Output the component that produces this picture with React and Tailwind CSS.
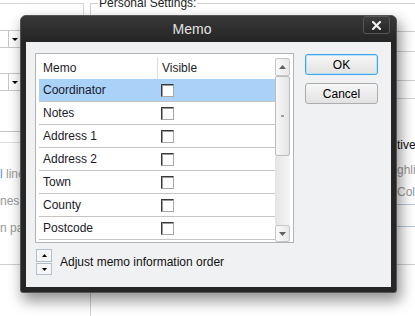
import React from "react";

// Memo dialog (dark frame) over a settings window
const rows = ["Coordinator", "Notes", "Address 1", "Address 2", "Town", "County", "Postcode"];

function Check() {
  return (
    <div className="w-[13px] h-[13px] bg-white border border-[#a8a8a8] border-t-[#3a3a3a] border-l-[#3a3a3a] shadow-[inset_1px_1px_0_#9a9a9a]" />
  );
}

function Arrow({ up, color = "#000", w = 7, h = 4 }) {
  return (
    <svg width={w} height={h} viewBox={`0 0 ${w} ${h}`}>
      <polygon points={up ? `0,${h} ${w / 2},0 ${w},${h}` : `0,0 ${w},0 ${w / 2},${h}`} fill={color} />
    </svg>
  );
}

function Combo() {
  return (
    <div className="h-[18px] w-[30px] border-y border-[#c8c8c8] flex">
      <div className="w-[9px] border-r border-[#c8c8c8]" />
      <div className="w-[12px] flex items-center justify-center">
        <Arrow w={6} h={3} />
      </div>
    </div>
  );
}

function Background() {
  return (
    <div className="flex w-[415px] h-[316px] bg-white text-[12px] text-[#999]">
      {/* left strip */}
      <div className="w-[90px] shrink-0 flex flex-col">
        <div className="h-[3px]" />
        <div className="h-[27px] w-[84px] border-t border-r border-[#d8d8d8]" />
        <Combo />
        <div className="h-[25px]" />
        <Combo />
        <div className="h-[41px] border-b border-[#c4c4c4]" />
        <div className="h-[11px] border-b border-[#e2e2e2]" />
        <div className="h-[17px]" />
        <div className="h-[27px] flex items-center whitespace-nowrap">
          <span className="text-[#5b8fd6]">l</span>&nbsp;line
        </div>
        <div className="h-[27px] flex items-center">nes</div>
        <div className="h-[27px] flex items-center">n pa</div>
        <div className="h-[24px] border-b border-[#d0d0d0]" />
      </div>

      {/* middle, mostly covered */}
      <div className="w-[307px] shrink-0 flex flex-col">
        <div className="h-[14px] -mt-[4px] flex items-center">
          <div className="w-[8px] h-[7px] self-end border-l border-t border-[#d0d0d0]" />
          <span className="px-px text-[#222] leading-[14px] whitespace-nowrap">Personal Settings:</span>
          <div className="flex-1 h-px bg-[#d0d0d0]" />
        </div>
        <div className="flex-1 border-l border-[#d0d0d0]" />
      </div>

      {/* right strip */}
      <div className="flex-1 min-w-0 flex flex-col whitespace-nowrap">
        <div className="h-[4px] border-b border-[#d0d0d0]" />
        <div className="h-[28px] border-b border-[#d0d0d0]" />
        <div className="h-[20px] border-b border-[#d0d0d0]" />
        <div className="h-[29px] border-b border-[#d0d0d0]" />
        <div className="h-[18px] border-b border-[#d0d0d0]" />
        <div className="h-[34px]" />
        <div className="h-[24px] flex items-center text-[#111]">tive</div>
        <div className="h-[25px] flex items-center">ghlig</div>
        <div className="h-[20px] flex items-center">Colo</div>
        <div className="h-[3px] border-b border-[#b4c6dc]" />
        <div className="h-[22px] border-b border-[#b4c6dc]" />
        <div className="h-[38px] border-b border-[#d0d0d0]" />
      </div>
    </div>
  );
}

function Scrollbar() {
  return (
    <div className="w-[15px] h-[184px] mt-px flex flex-col">
      <div className="h-[18px] rounded-[2px] border border-[#c6c6c6] bg-gradient-to-r from-[#fafafa] to-[#e8e8e8] flex items-center justify-center">
        <Arrow up color="#606060" />
      </div>
      <div className="h-[80px] rounded-[2px] border border-[#bcbcbc] bg-gradient-to-r from-[#f7f7f7] to-[#e4e4e4] flex items-center justify-center">
        <div className="w-[3px] h-[2px] bg-[#a0a0a0]" />
      </div>
      <div className="h-[69px] bg-gradient-to-r from-[#e4e4e4] to-[#f6f6f6]" />
      <div className="h-[17px] rounded-[2px] border border-[#c6c6c6] bg-gradient-to-r from-[#fafafa] to-[#e8e8e8] flex items-center justify-center">
        <Arrow color="#606060" />
      </div>
    </div>
  );
}

function Btn({ children, focused }) {
  return (
    <button
      type="button"
      className={
        focused
          ? "w-[73px] h-[21px] rounded-[3px] border border-[#3fa3e6] shadow-[inset_0_0_0_1px_#b8e4fb] bg-gradient-to-b from-[#f7f7f7] to-[#e2e2e2] text-[12px] text-black flex items-center justify-center"
          : "w-[73px] h-[21px] rounded-[3px] border border-[#acacac] bg-gradient-to-b from-[#f7f7f7] to-[#e2e2e2] text-[12px] text-black flex items-center justify-center"
      }
    >
      {children}
    </button>
  );
}

function Dialog() {
  return (
    <div className="absolute left-[20px] top-[15px] w-[377px] h-[278px] rounded-t-[6px] rounded-b-[3px] border border-[#555] bg-[#262626] shadow-[3px_7px_14px_1px_rgba(0,0,0,0.42)] flex flex-col">
      {/* title bar */}
      <div className="h-[26px] flex rounded-t-[5px] bg-gradient-to-b from-[#383838] to-[#252525]">
        <div className="flex-1 flex items-center justify-center text-[14px] text-[#e2e2e2] pt-px">Memo</div>
        <button
          type="button"
          className="w-[27px] h-[18px] mr-[6px] rounded-[3px] border border-[#555] bg-gradient-to-b from-[#3c3c3c] to-[#262626] flex items-center justify-center"
        >
          <svg width="9" height="9" viewBox="0 0 9 9">
            <path d="M1 1 L8 8 M8 1 L1 8" stroke="#f0f0f0" strokeWidth="2.2" strokeLinecap="square" />
          </svg>
        </button>
      </div>

      {/* client */}
      <div className="mx-[5px] h-[245px] bg-[#f0f1f3] pl-[9px] pt-[11px] flex flex-col">
        <div className="flex">
          <div className="w-[259px] h-[190px] border border-[#b4b4b4] bg-white pl-[3px] pt-[3px] pr-[3px] flex">
            <div className="flex-1 flex flex-col">
              <div className="h-[22px] flex text-[#1e1e1e]">
                <div className="w-[119px] pl-[4px] border-r border-[#dedede] flex items-center">Memo</div>
                <div className="pl-[4px] flex items-center">Visible</div>
              </div>
              {rows.map((r, i) => (
                <div
                  key={r}
                  className={
                    i === 0
                      ? "h-[23px] flex border-b border-[#c4c4c4] bg-[#aad1f8] text-[#1a1a2a]"
                      : "h-[23px] flex border-b border-[#c4c4c4] text-[#1a1a2a]"
                  }
                >
                  <div className="w-[119px] pl-[4px] flex items-center">{r}</div>
                  <div className="pl-[3px] flex items-center">
                    <Check />
                  </div>
                </div>
              ))}
            </div>
            <Scrollbar />
          </div>

          <div className="ml-[11px] mt-px flex flex-col gap-[8px]">
            <Btn focused>OK</Btn>
            <Btn>Cancel</Btn>
          </div>
        </div>

        <div className="mt-[6px] ml-px flex items-center">
          <div className="w-[16px] flex flex-col gap-px">
            <div className="h-[13px] border border-[#b3bfcc] bg-[#f6f6f6] flex items-center justify-center">
              <Arrow up w={5} h={3} />
            </div>
            <div className="h-[12px] border border-[#b3bfcc] bg-[#f6f6f6] flex items-center justify-center">
              <Arrow w={5} h={3} />
            </div>
          </div>
          <span className="ml-[8px] text-[#111]">Adjust memo information order</span>
        </div>
      </div>
    </div>
  );
}

export default function App() {
  return (
    <div className="relative w-[415px] h-[316px] overflow-hidden font-['Liberation_Sans',Arial,sans-serif] text-[12px]">
      <Background />
      <Dialog />
    </div>
  );
}
